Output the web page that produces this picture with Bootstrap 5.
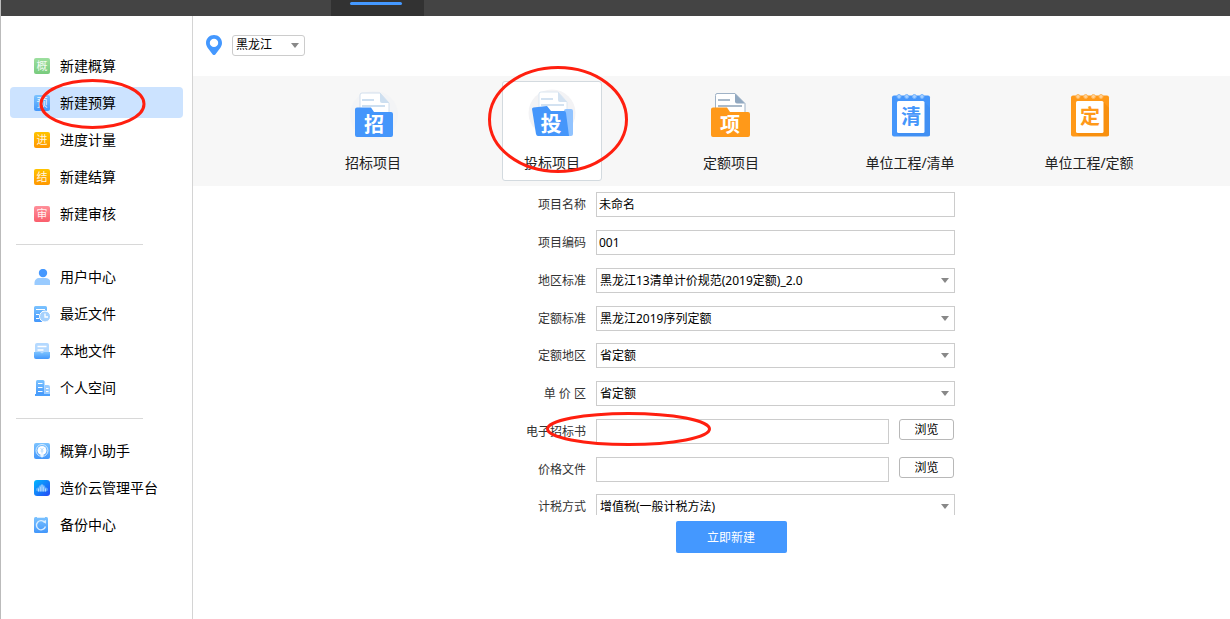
<!DOCTYPE html>
<html lang="zh-CN">
<head>
<meta charset="utf-8">
<meta name="viewport" content="width=device-width, initial-scale=1">
<title>新建预算</title>
<link href="https://cdn.jsdelivr.net/npm/bootstrap@5.3.0/dist/css/bootstrap.min.css" rel="stylesheet">
<style>
:root { --ink: #000; --brand: #4498ff; --line: #cccccc; }
body { font-family: "Noto Sans", "Noto Sans CJK SC", sans-serif; font-size: 12px; line-height: 20px; color: var(--ink); border-left: 1px solid #bbb; }
.app-top { height: 16px; background: #444; padding-left: 330px; }
.app-tab { width: 93px; background: #323232; padding: 2px 22px 0 19px; }
.app-tab span { height: 3px; border-radius: 2px; background: var(--brand); }
.side { width: 192px; border-right: 1px solid #d4d4d4; padding: 34px 9px 0; }
.side-list { gap: 6px; }
.side-link { height: 31px; padding-left: 24px; gap: 10px; border-radius: 4px; font-size: 14px; color: var(--ink); text-decoration: none; white-space: nowrap; }
.side-link.active { background: #cce3ff; }
.side-icon { width: 16px; height: 16px; flex: none; }
.side hr { width: 127px; margin: 15px 0 16px 6px; border-color: #d8d8d8; opacity: 1; }
.region-bar { height: 60px; padding: 0 0 2px 13px; gap: 10px; }
.form-select.pick, .form-control.fill { border: 1px solid var(--line); border-radius: 0; height: 25px; font-size: 12px; line-height: 20px; color: var(--ink); background-color: #fff; min-height: 0; }
.form-select.pick { --arrow: url("data:image/svg+xml,%3csvg xmlns='http://www.w3.org/2000/svg' viewBox='0 0 8 5'%3e%3cpath fill='%23888' d='M0 0h8L4 5z'/%3e%3c/svg%3e"); background-image: var(--arrow); background-size: 8px 5px; background-position: right 5px center; padding: 1px 18px 0 3px; }
.form-control.fill { padding: 0 2px 1px; }
.form-select.region { width: 73px; height: 21px; border-radius: 3px; line-height: 18px; padding-top: 0; }
.kinds { background: #f7f7f7; padding: 5px 0 5px 39px; gap: 79px; }
.kind { width: 100px; height: 100px; padding: 7px 0 0; border: 1px solid transparent; border-radius: 3px; background: none; font-size: 14px; color: #222; white-space: nowrap; }
.kind.active { background: #fff; border-color: #d3dadf; }
.kind-icon { width: 50px; height: 50px; margin-bottom: 14px; }
.entry { padding: 6px 0 0 39px; }
.entry-rows { width: 448px; height: 323px; overflow: hidden; gap: 12px; }
.entry-rows fieldset { display: grid; gap: 13px; }
.entry-row { display: grid; grid-template-columns: 79px 1fr; column-gap: 10px; }
.entry-row label { text-align: right; color: #333; line-height: 25px; white-space: nowrap; }
.file-field { display: flex; gap: 10px; }
.browse { width: 55px; height: 21px; margin-right: 1px; padding: 0; border: 1px solid #b8b8b8; border-radius: 3px; background: #fff; font-size: 12px; line-height: 18px; color: var(--ink); }
.submit { width: 111px; height: 32px; margin-top: 6px; padding: 2px 0 0; border: 0; border-radius: 2px; background: var(--brand); color: #fff; font-size: 12px; line-height: 20px; }
.glyph { font-family: "Noto Sans CJK SC", sans-serif; text-anchor: middle; }
.ring { position: absolute; overflow: visible; pointer-events: none; fill: none; stroke: #ff1f0f; stroke-width: 3px; z-index: 2; }
.ring-side { left: 29px; top: -8px; width: 107px; height: 50px; }
.ring-kind { left: -15px; top: -16px; width: 140px; height: 107px; }
.ring-file { left: 39px; top: 220px; width: 165px; height: 34px; }
</style>
</head>
<body class="d-flex flex-column min-vh-100">
<svg width="0" height="0" class="position-absolute" aria-hidden="true">
  <defs>
    <linearGradient id="gGreen" x2="0" y2="1"><stop stop-color="#9ddf9f"/><stop offset="1" stop-color="#78cb7d"/></linearGradient>
    <linearGradient id="gBlue" x2="0" y2="1"><stop stop-color="#7cc3ff"/><stop offset="1" stop-color="#4397fb"/></linearGradient>
    <linearGradient id="gGold" x2="0" y2="1"><stop stop-color="#ffc400"/><stop offset="1" stop-color="#ff9700"/></linearGradient>
    <linearGradient id="gRose" x2="0" y2="1"><stop stop-color="#ff909a"/><stop offset="1" stop-color="#fa5e6c"/></linearGradient>
    <linearGradient id="gCloud" x2="1" y2="1"><stop stop-color="#00b8ff"/><stop offset="1" stop-color="#2649f5"/></linearGradient>
  </defs>
</svg>
<header class="app-top d-flex"><div class="app-tab"><span class="d-block"></span></div></header>
<div class="d-flex flex-grow-1">
  <nav class="side flex-shrink-0" aria-label="主菜单">
    <div class="side-list d-flex flex-column">
      <a class="side-link d-flex align-items-center" href="#"><svg class="side-icon" viewBox="0 0 16 16"><rect width="16" height="16" rx="2" fill="url(#gGreen)"/><text class="glyph" x="8" y="12" font-size="11" fill="#fff" fill-opacity=".9">概</text></svg>新建概算</a>
      <a class="side-link active d-flex align-items-center position-relative" href="#"><svg class="side-icon" viewBox="0 0 16 16"><rect width="16" height="16" rx="2" fill="url(#gBlue)"/><text class="glyph" x="8" y="12" font-size="11" fill="#fff" fill-opacity=".9">预</text></svg>新建预算
        <svg class="ring ring-side" viewBox="0 0 107 50"><ellipse cx="53.500" cy="25" rx="51.500" ry="23.500"/></svg></a>
      <a class="side-link d-flex align-items-center" href="#"><svg class="side-icon" viewBox="0 0 16 16"><rect width="16" height="16" rx="2" fill="url(#gGold)"/><text class="glyph" x="8" y="12" font-size="11" fill="#fff" fill-opacity=".9">进</text></svg>进度计量</a>
      <a class="side-link d-flex align-items-center" href="#"><svg class="side-icon" viewBox="0 0 16 16"><rect width="16" height="16" rx="2" fill="url(#gGold)"/><text class="glyph" x="8" y="12" font-size="11" fill="#fff" fill-opacity=".9">结</text></svg>新建结算</a>
      <a class="side-link d-flex align-items-center" href="#"><svg class="side-icon" viewBox="0 0 16 16"><rect width="16" height="16" rx="2" fill="url(#gRose)"/><text class="glyph" x="8" y="12" font-size="11" fill="#fff" fill-opacity=".9">审</text></svg>新建审核</a>
    </div>
    <hr>
    <div class="side-list d-flex flex-column">
      <a class="side-link d-flex align-items-center" href="#"><svg class="side-icon" viewBox="0 0 16 16"><path d="M1 16v-2c0-3 2-5 5-5h6c3 0 5 2 5 5v2z" fill="#99cbff" transform="translate(-.5 0)"/><circle cx="9" cy="4" r="4.200" fill="#4498ff"/></svg>用户中心</a>
      <a class="side-link d-flex align-items-center" href="#"><svg class="side-icon" viewBox="0 0 16 16"><path d="M1.500 0h10q1.500 0 1.500 1.500V5H0V1.500Q0 0 1.500 0zM0 5h8v11H1.500Q0 16 0 14.500z" fill="url(#gBlue)"/><path d="M2 3.500h9M2 8.500h3M2 12.500h3" stroke="#fff" stroke-width="1.200"/><circle cx="11" cy="10.500" r="5.500" fill="#a5d1fd" stroke="#fff"/><path d="M11 7.500v3.500h3" fill="none" stroke="#fff" stroke-width="1.300"/></svg>最近文件</a>
      <a class="side-link d-flex align-items-center" href="#"><svg class="side-icon" viewBox="0 0 16 16"><path d="M1 2q0-2 2-2h10q2 0 2 2v9H1z" fill="#b4d9ff"/><path d="M3.500 3.500h9M3.500 7h6" stroke="#fff" stroke-width="1.300"/><path d="M0 9h6l2 1.500L10 9h6v5q0 2-2 2H2q-2 0-2-2z" fill="url(#gBlue)"/></svg>本地文件</a>
      <a class="side-link d-flex align-items-center" href="#"><svg class="side-icon" viewBox="0 0 16 16"><path d="M2 15V1.500Q2 0 3.500 0H9q1.500 0 1.500 1.500V15z" fill="url(#gBlue)"/><path d="M11 5h3q2 0 2 2v8h-5z" fill="#9ccdff"/><path d="M4 3.500h4.500M4 7.500h4.500M4 11.500h4.500M12 8.500h2.500M12 11.500h2.500" stroke="#fff" stroke-width="1.200"/><path d="M1 14h15v2H1z" fill="#4ca0fc"/></svg>个人空间</a>
    </div>
    <hr>
    <div class="side-list d-flex flex-column">
      <a class="side-link d-flex align-items-center" href="#"><svg class="side-icon" viewBox="0 0 16 16"><rect width="16" height="16" rx="2" fill="url(#gBlue)"/><circle cx="8" cy="7.500" r="6" fill="none" stroke="#d5ecff"/><circle cx="8" cy="7.500" r="4.500" fill="#fff"/><path d="M6.500 5 8 7l1.500-2M8 7v3.500M6.500 8h3" fill="none" stroke="#a9d4fc" stroke-width=".8"/><path d="m6 12 2 3 2-3z" fill="#e6f4ff"/></svg>概算小助手</a>
      <a class="side-link d-flex align-items-center" href="#"><svg class="side-icon" viewBox="0 0 16 16"><rect width="16" height="16" rx="3" fill="url(#gCloud)"/><path d="M4.500 11.500C1 11.500 1.500 7 4.500 7.500 5 3.500 11 3.500 11.500 7.500c3-.5 3.500 4 0 4z" fill="#78bdff" fill-opacity=".65"/><path d="M4.500 11.500v-3M6.300 11.500v-5M8 11.500v-7M9.700 11.500v-5M11.500 11.500v-3" stroke="#bde1ff" stroke-width=".9"/></svg>造价云管理平台</a>
      <a class="side-link d-flex align-items-center" href="#"><svg class="side-icon" viewBox="0 0 16 16"><rect width="14" height="16" rx="1.500" fill="url(#gBlue)"/><path d="M3 0h8v1H3z" fill="#d8edff"/><path d="M10.800 5.500A4.600 4.600 0 1 0 11.500 9.500" fill="none" stroke="#d8edff" stroke-width="1.400"/><path d="M8.500 4.500 12 3v3.800z" fill="#d8edff"/></svg>备份中心</a>
    </div>
  </nav>
  <main class="flex-grow-1">
    <div class="region-bar d-flex align-items-center">
      <svg width="16" height="20" viewBox="0 0 16 20" aria-hidden="true"><path fill="#4498ff" fill-rule="evenodd" d="M8 0C3.500 0 0 3.500 0 8c0 4 3.500 7 6.500 11.200Q8 21 9.500 19.200C12.500 15 16 12 16 8c0-4.500-3.500-8-8-8zm0 3.700a4.200 4.200 0 1 1 0 8.400 4.200 4.200 0 0 1 0-8.400z"/></svg>
      <select class="form-select pick region" aria-label="地区"><option>黑龙江</option></select>
    </div>
    <div class="kinds d-flex justify-content-center">
      <button type="button" class="kind d-flex flex-column align-items-center">
        <svg class="kind-icon" viewBox="0 0 50 50"><circle cx="26" cy="26" r="24" fill="#f3f4f6"/><path d="M14 4h18l9 10v16H12V6q0-2 2-2z" fill="#fff" stroke="#d2dfed"/><path d="M32 4v8q0 2 2 2h7z" fill="#cddff0"/><path d="M14 11h12M14 17h23" stroke="#cddff0" stroke-width="2"/><path d="M9 18.500h14l3 4.500h17q2 0 2 2v21q0 2-2 2H9q-2 0-2-2v-25.500q0-2 2-2z" fill="#4596fb"/><text class="glyph" x="26" y="43" font-size="20" font-weight="700" fill="#fff">招</text></svg>招标项目</button>
      <button type="button" class="kind active d-flex flex-column align-items-center position-relative">
        <svg class="kind-icon" viewBox="0 0 50 50"><circle cx="25" cy="24" r="23.500" fill="#f3f3f5"/><path d="M14 3h17l9 10v20H12V5q0-2 2-2z" fill="#fff" stroke="#dce7f1"/><path d="M31 3v8q0 2 2 2h7z" fill="#d3e2f1"/><path d="M14 10h12M14 16h23" stroke="#d3e2f1" stroke-width="2"/><rect x="37" y="20" width="9" height="27" rx="2" fill="#91c3ff"/><path d="M6.500 18.500 20 17l4 5h13q2 0 2 2l3 23H11q-1.500 0-2-2L5 20q0-1.500 1.500-1.500z" fill="#4596fb"/><text class="glyph" x="24" y="42" font-size="21" font-weight="700" fill="#fff">投</text></svg>投标项目
        <svg class="ring ring-kind" viewBox="0 0 140 107"><ellipse cx="70" cy="53.500" rx="68.500" ry="52"/></svg></button>
      <button type="button" class="kind d-flex flex-column align-items-center">
        <svg class="kind-icon" viewBox="0 0 50 50"><path d="M11 4.500h18l10 10V30H9.500V6.500q0-2 1.500-2z" fill="#fff" stroke="#9fb2c6"/><path d="M29 4.500v8q0 2 2 2h8z" fill="#91a8c0"/><path d="M12 11h12M12 17h24" stroke="#aabaca" stroke-width="2"/><path d="M7 18.500h14l3 4.500h18q2 0 2 2v21q0 2-2 2H7q-2 0-2-2v-25.500q0-2 2-2z" fill="#ff9919"/><text class="glyph" x="24" y="43" font-size="20" font-weight="700" fill="#fff">项</text></svg>定额项目</button>
      <button type="button" class="kind d-flex flex-column align-items-center">
        <svg class="kind-icon" viewBox="0 0 50 50"><rect x="7" y="6.500" width="38" height="41" rx="2" fill="#4596fb"/><path d="M39.500 13 45 19v28H15l-3-3z" fill="#3c87e8" fill-opacity=".4"/><rect x="12" y="12" width="27.500" height="32" rx="1.500" fill="#fff"/><g fill="#a7d0ff" stroke="#74b4ff"><circle cx="14" cy="7.500" r="2"/><circle cx="21.700" cy="7.500" r="2"/><circle cx="29.400" cy="7.500" r="2"/><circle cx="37" cy="7.500" r="2"/></g><text class="glyph" x="26" y="35" font-size="20" font-weight="700" fill="#4596fb">清</text></svg>单位工程/清单</button>
      <button type="button" class="kind d-flex flex-column align-items-center">
        <svg class="kind-icon" viewBox="0 0 50 50"><rect x="7" y="6.500" width="38" height="41" rx="2" fill="#ff9919"/><path d="M39.500 13 45 19v28H15l-3-3z" fill="#ee8200" fill-opacity=".4"/><rect x="12" y="12" width="27.500" height="32" rx="1.500" fill="#fff"/><g fill="#ffd298" stroke="#ffb75a"><circle cx="14" cy="7.500" r="2"/><circle cx="21.700" cy="7.500" r="2"/><circle cx="29.400" cy="7.500" r="2"/><circle cx="37" cy="7.500" r="2"/></g><text class="glyph" x="26" y="35" font-size="20" font-weight="700" fill="#ff9919">定</text></svg>单位工程/定额</button>
    </div>
    <form class="entry d-flex flex-column align-items-center">
      <div class="entry-rows d-flex flex-column position-relative">
        <fieldset>
          <div class="entry-row"><label for="pName">项目名称</label><input id="pName" class="form-control fill" value="未命名"></div>
          <div class="entry-row"><label for="pCode">项目编码</label><input id="pCode" class="form-control fill" value="001"></div>
          <div class="entry-row"><label for="pArea">地区标准</label><select id="pArea" class="form-select pick"><option>黑龙江13清单计价规范(2019定额)_2.0</option></select></div>
          <div class="entry-row"><label for="pNorm">定额标准</label><select id="pNorm" class="form-select pick"><option>黑龙江2019序列定额</option></select></div>
        </fieldset>
        <fieldset>
          <div class="entry-row"><label for="pZone">定额地区</label><select id="pZone" class="form-select pick"><option>省定额</option></select></div>
          <div class="entry-row"><label for="pPrice">单 价 区</label><select id="pPrice" class="form-select pick"><option>省定额</option></select></div>
          <div class="entry-row"><label for="pTender">电子招标书</label><div class="file-field"><input id="pTender" class="form-control fill"><button type="button" class="browse flex-shrink-0">浏览</button></div></div>
          <div class="entry-row"><label for="pFile">价格文件</label><div class="file-field"><input id="pFile" class="form-control fill"><button type="button" class="browse flex-shrink-0">浏览</button></div></div>
        </fieldset>
        <fieldset>
          <div class="entry-row"><label for="pTax">计税方式</label><select id="pTax" class="form-select pick"><option>增值税(一般计税方法)</option></select></div>
        </fieldset>
        <svg class="ring ring-file" viewBox="0 0 165 34"><ellipse cx="82.500" cy="17" rx="81" ry="15.500"/></svg>
      </div>
      <button type="submit" class="submit">立即新建</button>
    </form>
  </main>
</div>
<script src="https://cdn.jsdelivr.net/npm/bootstrap@5.3.0/dist/js/bootstrap.bundle.min.js"></script>
</body>
</html>
